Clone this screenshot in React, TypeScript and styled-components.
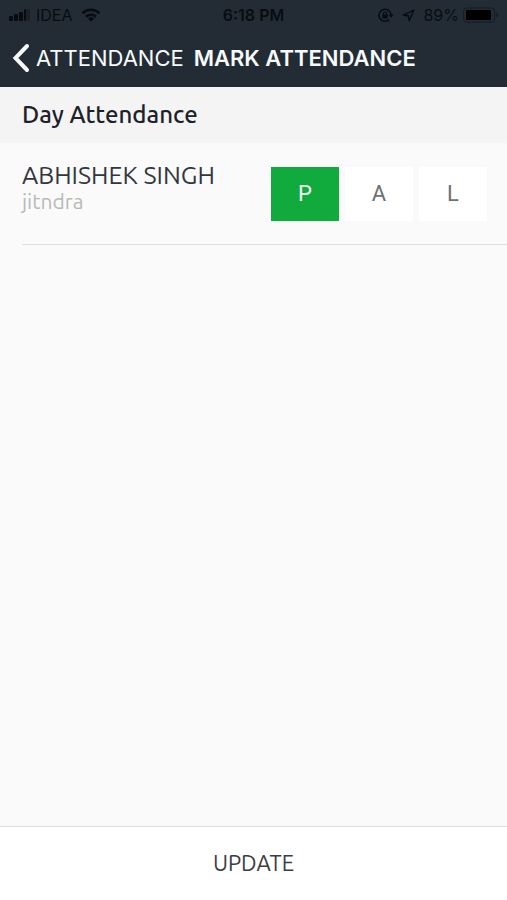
import React, { useState } from "react";
import styled, { createGlobalStyle } from "styled-components";

const GlobalStyle = createGlobalStyle`
  * { box-sizing: border-box; }
  body { margin: 0; background: #fafafa; }
`;

const uiFont = `Inter, "Liberation Sans", sans-serif`;
const bodyFont = `Ubuntu, "Noto Sans", "Open Sans", sans-serif`;

const Screen = styled.div`
  display: flex;
  flex-direction: column;
  min-height: 100vh;
  background: #fafafa;
  font-family: ${bodyFont};
`;

const TopBar = styled.header`
  background: #232c34;
  font-family: ${uiFont};
`;

const StatusBar = styled.div`
  display: grid;
  grid-template-columns: 1fr auto 1fr;
  align-items: center;
  height: 30px;
  padding: 0 8px;
  color: #080c12;
  font-size: 16px;
  line-height: 20px;
`;

const StatusGroup = styled.div<{ $end?: boolean }>`
  display: flex;
  align-items: center;
  justify-content: ${(p) => (p.$end ? "flex-end" : "flex-start")};
  gap: 8px;
`;

const StatusPair = styled.div`
  display: flex;
  align-items: center;
  gap: 4px;
`;

const Clock = styled.time`
  font-size: 16px;
  font-weight: 600;
`;

const NavBar = styled.nav`
  display: flex;
  align-items: center;
  gap: 10px;
  height: 57px;
  padding: 0 12px 2px;
  color: #f7fafc;
  white-space: nowrap;
`;

const BackLink = styled.a`
  display: flex;
  align-items: center;
  gap: 6px;
  color: inherit;
  font-size: 22px;
  line-height: 28px;
  text-decoration: none;
`;

const Title = styled.h1`
  margin: 0;
  font-size: 22px;
  font-weight: 600;
  line-height: 28px;
`;

const Content = styled.main`
  flex: 1;
`;

const SectionHeading = styled.h2`
  margin: 0;
  padding: 14px 22px;
  background: #f4f4f4;
  color: #1d2129;
  font-size: 24px;
  font-weight: 500;
  line-height: 28px;
`;

const PersonRow = styled.section`
  display: flex;
  align-items: flex-start;
  justify-content: space-between;
  margin-left: 22px;
  padding: 18px 20px 23px 0;
  border-bottom: 1px solid #dfdfe0;
`;

const PersonName = styled.div`
  color: #34363d;
  font-size: 25px;
  line-height: 28px;
`;

const PersonNote = styled.div`
  color: #b8b8b8;
  font-size: 21px;
  line-height: 24px;
`;

const Choices = styled.fieldset`
  display: flex;
  gap: 6px;
  margin: 6px 0 0;
  padding: 0;
  border: 0;
`;

const Choice = styled.label<{ $active: boolean }>`
  position: relative;
  display: flex;
  align-items: center;
  justify-content: center;
  width: 68px;
  height: 54px;
  background: ${(p) => (p.$active ? "#10aa3d" : "#ffffff")};
  color: ${(p) => (p.$active ? "#f0fbf3" : "#6e7072")};
  font-family: Roboto, sans-serif;
  font-size: 22px;
  line-height: 28px;
  cursor: pointer;
`;

const ChoiceInput = styled.input`
  position: absolute;
  inset: 0;
  width: 100%;
  height: 100%;
  margin: 0;
  opacity: 0;
  cursor: pointer;
`;

const UpdateButton = styled.button`
  height: 74px;
  padding: 0 0 2px;
  border: 0;
  border-top: 1px solid #dfdfe0;
  background: #ffffff;
  color: #3b3d42;
  font-family: ${bodyFont};
  font-size: 22px;
  line-height: 28px;
  cursor: pointer;
`;

const Signal = () => (
  <svg width="24" height="14" viewBox="0 0 24 14" fill="currentColor" aria-hidden="true">
    <rect x="1" y="8" width="4" height="5" rx="1" />
    <rect x="6" y="6" width="4" height="7" rx="1" />
    <rect x="11" y="4" width="4" height="9" rx="1" />
    <rect x="16" y="1" width="2" height="12" rx="1" />
    <rect x="18" y="1" width="4" height="12" rx="1" opacity=".3" />
  </svg>
);

const Wifi = () => (
  <svg width="20" height="14" viewBox="0 0 20 14" fill="none" stroke="currentColor" strokeWidth="2.6" aria-hidden="true">
    <path d="M1.5 5.2a12.2 12.2 0 0 1 17 0" />
    <path d="M5 8.8a7.2 7.2 0 0 1 10 0" />
    <path d="M10 13.7l-3-3a4.3 4.3 0 0 1 6 0z" fill="currentColor" stroke="none" />
  </svg>
);

const RotationLock = () => (
  <svg width="16" height="15" viewBox="0 0 16 15" fill="none" stroke="currentColor" aria-hidden="true">
    <path d="M13 7A6 6 0 1 0 11.2 11.6" strokeWidth="1.5" />
    <path d="M10.6 6.6h5L13 9.8z" fill="currentColor" stroke="none" />
    <rect x="4.3" y="6.6" width="5.4" height="4" rx=".5" fill="currentColor" stroke="none" />
    <path d="M5.4 7V5.6a1.6 1.6 0 0 1 3.2 0V7" strokeWidth="1.2" />
  </svg>
);

const LocationArrow = () => (
  <svg width="13" height="13" viewBox="0 0 13 13" fill="none" stroke="currentColor" strokeWidth="1.4" strokeLinejoin="round" aria-hidden="true">
    <path d="M11.8 1.2 1.4 6.2l4.8.6 1 4.8z" />
  </svg>
);

const Battery = () => (
  <svg width="36" height="16" viewBox="0 0 36 16" aria-hidden="true">
    <rect x=".7" y="1" width="31" height="14" rx="3" fill="none" stroke="#151b21" strokeWidth="1" />
    <rect x="3" y="3" width="25" height="10" rx="1" fill="#000" />
    <path d="M33.3 5.5c2.6.8 2.6 4.2 0 5z" fill="#151b21" />
  </svg>
);

const BackChevron = () => (
  <svg width="18" height="30" viewBox="0 0 18 30" fill="none" stroke="currentColor" strokeWidth="4" strokeLinecap="round" strokeLinejoin="miter" aria-hidden="true">
    <path d="M15 3 3.5 15 15 27" />
  </svg>
);

const options = [
  { code: "P", name: "Present" },
  { code: "A", name: "Absent" },
  { code: "L", name: "Leave" },
];

export default function App() {
  const [mark, setMark] = useState("P");
  return (
    <Screen>
      <GlobalStyle />
      <TopBar>
        <StatusBar>
          <StatusGroup>
            <StatusPair>
              <Signal />
              <span>IDEA</span>
            </StatusPair>
            <Wifi />
          </StatusGroup>
          <Clock>6:18 PM</Clock>
          <StatusGroup $end>
            <RotationLock />
            <LocationArrow />
            <StatusPair>
              <span>89%</span>
              <Battery />
            </StatusPair>
          </StatusGroup>
        </StatusBar>
        <NavBar>
          <BackLink href="#attendance">
            <BackChevron />
            ATTENDANCE
          </BackLink>
          <Title>MARK ATTENDANCE</Title>
        </NavBar>
      </TopBar>
      <Content>
        <SectionHeading>Day Attendance</SectionHeading>
        <PersonRow>
          <div>
            <PersonName>ABHISHEK SINGH</PersonName>
            <PersonNote>jitndra</PersonNote>
          </div>
          <Choices aria-label="Attendance for Abhishek Singh">
            {options.map(({ code, name }) => (
              <Choice key={code} $active={mark === code}>
                <ChoiceInput
                  type="radio"
                  name="attendance"
                  value={code}
                  aria-label={name}
                  checked={mark === code}
                  onChange={() => setMark(code)}
                />
                {code}
              </Choice>
            ))}
          </Choices>
        </PersonRow>
      </Content>
      <UpdateButton type="button">UPDATE</UpdateButton>
    </Screen>
  );
}
